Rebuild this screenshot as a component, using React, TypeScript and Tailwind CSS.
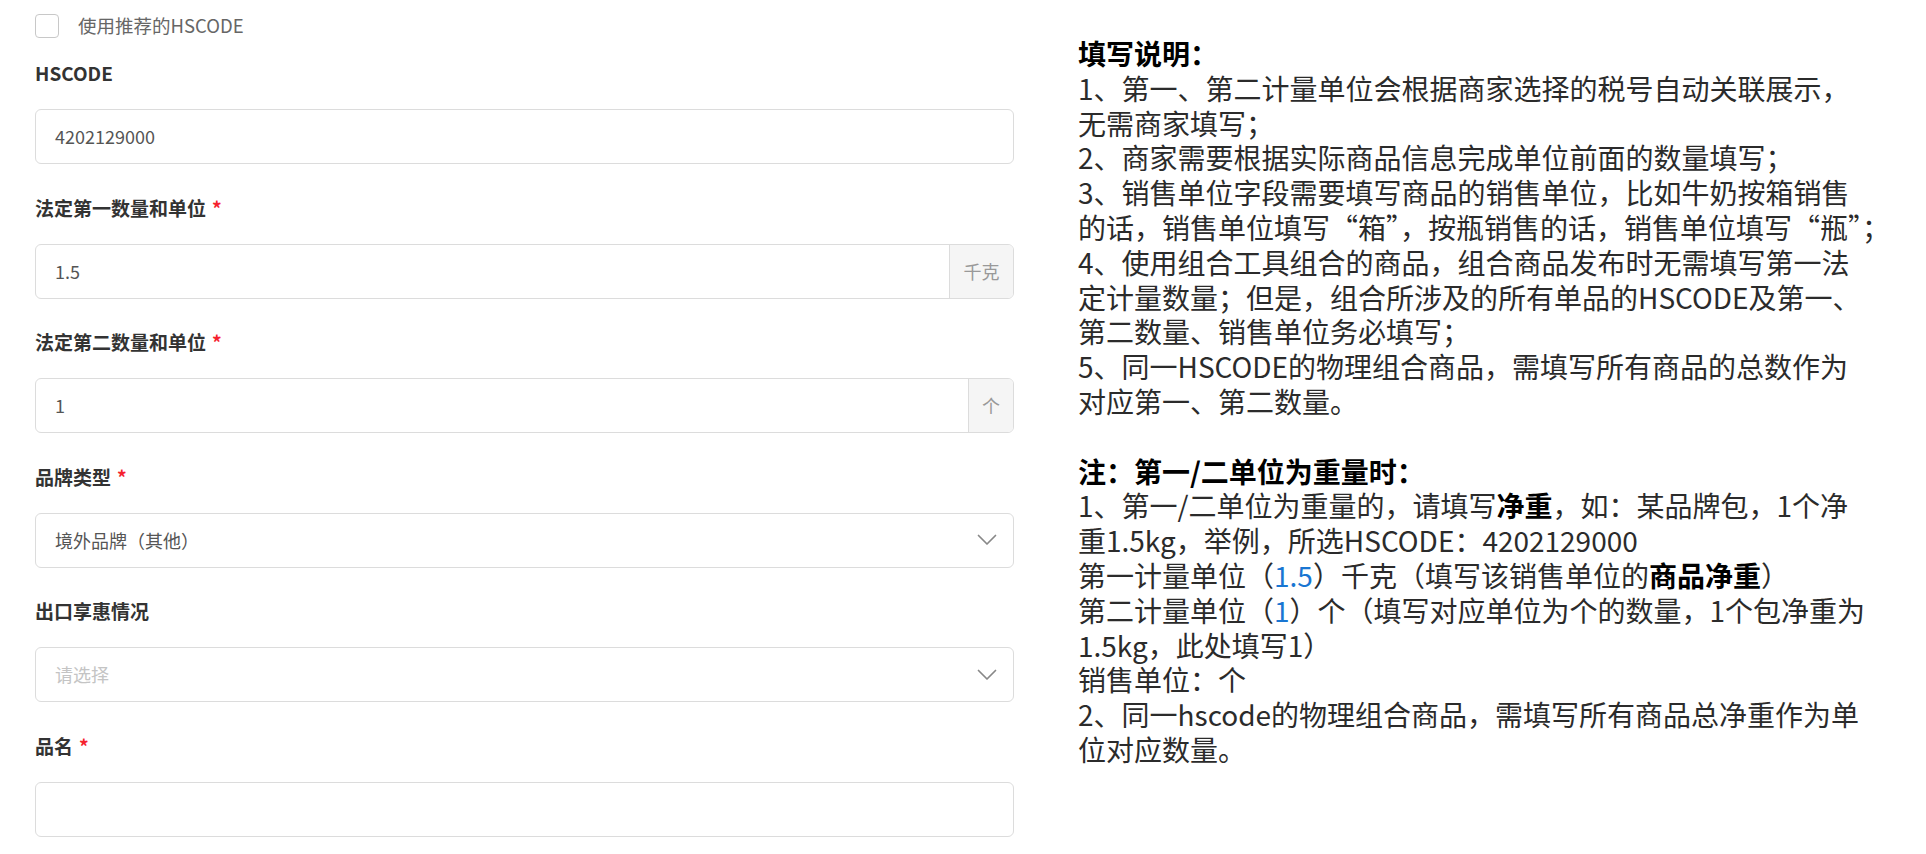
const font = { fontFamily: '"Noto Sans CJK SC", "Noto Sans", sans-serif' };

function Label({ text, required }: { text: string; required?: boolean }) {
  return (
    <div className="h-6 leading-6 text-[19px] font-bold text-[#333] flex items-center">
      <span>{text}</span>
      {required && <span className="ml-1.5 text-[#f5222d]">*</span>}
    </div>
  );
}

function TextInput({ value, placeholder, addon, addonWide }: { value?: string; placeholder?: string; addon?: string; addonWide?: boolean }) {
  return (
    <div className="mt-6 h-[55px] flex border border-[#dcdcdc] rounded-[6px] overflow-hidden bg-white">
      <div className="flex-1 flex items-center px-[19px] text-[18px] text-[#555]">
        {value ?? <span className="text-[#c4c4c4]">{placeholder}</span>}
      </div>
      {addon && (
        <div
          className={`${addonWide ? "w-[64px]" : "w-[45px]"} flex items-center justify-center bg-[#f5f5f5] border-l border-[#dcdcdc] text-[18px] text-[#999]`}
        >
          {addon}
        </div>
      )}
    </div>
  );
}

function SelectBox({ value, placeholder }: { value?: string; placeholder?: string }) {
  return (
    <div className="mt-6 h-[55px] flex items-center border border-[#dcdcdc] rounded-[6px] bg-white pl-[19px] pr-4">
      <div className="flex-1 text-[18px] text-[#555]">
        {value ?? <span className="text-[#c4c4c4]">{placeholder}</span>}
      </div>
      <svg width="20" height="12" viewBox="0 0 20 12" fill="none" className="text-[#888]">
        <path d="M1.5 1.5 L10 10 L18.5 1.5" stroke="currentColor" strokeWidth="1.7" strokeLinecap="round" strokeLinejoin="round" />
      </svg>
    </div>
  );
}

const B = ({ children }: { children: React.ReactNode }) => (
  <strong className="inline-block leading-[34.8px] font-bold text-black">{children}</strong>
);
const Blue = ({ children }: { children: React.ReactNode }) => (
  <span className="inline-block leading-[34.8px] text-[#1976d2]">{children}</span>
);

export default function App() {
  return (
    <div className="w-[1926px] h-[854px] bg-white flex overflow-hidden" style={font}>
      {/* Left: form */}
      <div className="w-[1014px] pl-[35px] pt-[14px] shrink-0">
        <div className="h-6 flex items-center">
          <div className="w-6 h-6 border border-[#c8c8c8] rounded-[4px] bg-white" />
          <span className="ml-[19px] text-[18.5px] text-[#666]">使用推荐的HSCODE</span>
        </div>

        <div className="mt-[23px]">
          <Label text="HSCODE" />
          <TextInput value="4202129000" />
        </div>

        <div className="mt-[31.5px]">
          <Label text="法定第一数量和单位" required />
          <TextInput value="1.5" addon="千克" addonWide />
        </div>

        <div className="mt-[31.5px]">
          <Label text="法定第二数量和单位" required />
          <TextInput value="1" addon="个" />
        </div>

        <div className="mt-[31.5px]">
          <Label text="品牌类型" required />
          <SelectBox value="境外品牌（其他）" />
        </div>

        <div className="mt-[31.5px]">
          <Label text="出口享惠情况" />
          <SelectBox placeholder="请选择" />
        </div>

        <div className="mt-[31.5px]">
          <Label text="品名" required />
          <TextInput value="" />
        </div>
      </div>

      {/* Right: notes */}
      <div className="ml-[64px] pt-[36px] text-[28px] leading-[34.8px] text-[#2b2b2b] whitespace-nowrap">
        <div className="font-bold text-black">填写说明：</div>
        <div>1、第一、第二计量单位会根据商家选择的税号自动关联展示，</div>
        <div>无需商家填写；</div>
        <div>2、商家需要根据实际商品信息完成单位前面的数量填写；</div>
        <div>3、销售单位字段需要填写商品的销售单位，比如牛奶按箱销售</div>
        <div>的话，销售单位填写“箱”，按瓶销售的话，销售单位填写“瓶”；</div>
        <div>4、使用组合工具组合的商品，组合商品发布时无需填写第一法</div>
        <div>定计量数量；但是，组合所涉及的所有单品的HSCODE及第一、</div>
        <div>第二数量、销售单位务必填写；</div>
        <div>5、同一HSCODE的物理组合商品，需填写所有商品的总数作为</div>
        <div>对应第一、第二数量。</div>
        <div className="h-[34.8px]" />
        <div className="font-bold text-black">注：第一/二单位为重量时：</div>
        <div>
          1、第一/二单位为重量的，请填写<B>净重</B>，如：某品牌包，1个净
        </div>
        <div>重1.5kg，举例，所选HSCODE：4202129000</div>
        <div>
          第一计量单位（<Blue>1.5</Blue>）千克（填写该销售单位的<B>商品净重</B>）
        </div>
        <div>
          第二计量单位（<Blue>1</Blue>）个（填写对应单位为个的数量，1个包净重为
        </div>
        <div>1.5kg，此处填写1）</div>
        <div>销售单位：个</div>
        <div>2、同一hscode的物理组合商品，需填写所有商品总净重作为单</div>
        <div>位对应数量。</div>
      </div>
    </div>
  );
}
